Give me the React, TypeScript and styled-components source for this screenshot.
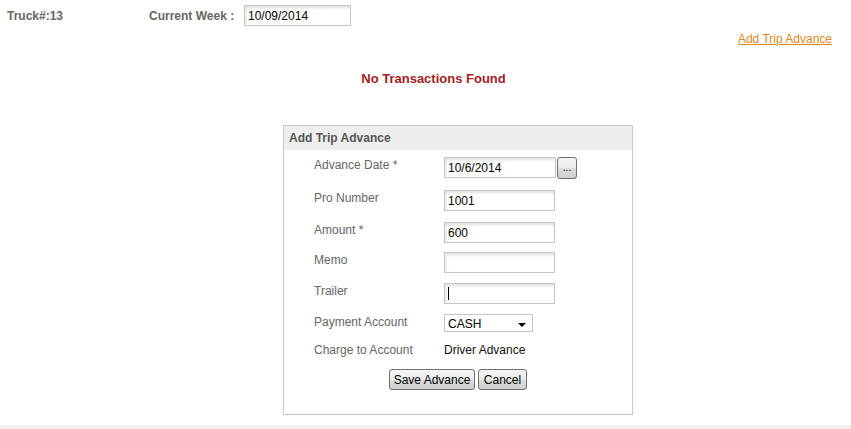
import React from 'react';
import styled, { createGlobalStyle } from 'styled-components';

const GlobalStyle = createGlobalStyle`
  html, body {
    margin: 0;
    padding: 0;
    background: #ffffff;
    font-family: "Liberation Sans", Arial, sans-serif;
    font-size: 12px;
  }
`;

const Page = styled.div`
  width: 851px;
  height: 429px;
  display: flex;
  flex-direction: column;
  overflow: hidden;
`;

const TopBar = styled.div`
  display: flex;
  align-items: center;
  height: 32px;
  padding-left: 7px;
  padding-bottom: 1px;
  box-sizing: border-box;
`;

const TopLabel = styled.div<{ width: number }>`
  width: ${p => p.width}px;
  font-weight: bold;
  color: #666666;
  font-size: 12px;
`;

const TextInput = styled.input<{ w?: number }>`
  box-sizing: border-box;
  width: ${p => p.w ?? 111}px;
  height: 21px;
  margin: 0;
  padding: 1px 3px 0;
  border: 1px solid #c6c6c6;
  box-shadow: inset 1px 2px 3px rgba(0, 0, 0, 0.12);
  font-family: "Liberation Sans", Arial, sans-serif;
  font-size: 12px;
  color: #000000;
  background: #ffffff;
  outline: none;
`;

const LinkRow = styled.div`
  text-align: right;
  padding-right: 19px;
  line-height: 14px;
  height: 14px;
`;

const OrangeLink = styled.a`
  color: #e2871c;
  text-decoration: underline;
  font-size: 12px;
  cursor: pointer;
`;

const Message = styled.div`
  margin-top: 25px;
  padding-left: 16px;
  text-align: center;
  font-weight: bold;
  font-size: 13px;
  line-height: 16px;
  color: #a31d24;
`;

const Panel = styled.div`
  margin: 38px 0 0 283px;
  width: 350px;
  height: 290px;
  box-sizing: border-box;
  border: 1px solid #c8c8c8;
  display: flex;
  flex-direction: column;
`;

const PanelHeader = styled.div`
  height: 24px;
  line-height: 24px;
  background: #eeeeee;
  padding-left: 5px;
  font-weight: bold;
  color: #555555;
  font-size: 12px;
`;

const PanelBody = styled.div`
  padding: 7px 0 0 30px;
  display: flex;
  flex-direction: column;
`;

const FormRow = styled.div<{ h: number }>`
  display: flex;
  align-items: flex-start;
  height: ${p => p.h}px;
`;

const FieldLabel = styled.div`
  width: 130px;
  color: #666666;
  font-size: 12px;
  line-height: 14px;
  margin-top: 1px;
`;

const FieldValue = styled.div`
  color: #111111;
  font-size: 12px;
  line-height: 14px;
  margin-top: 1px;
`;

const InputWrap = styled.div`
  position: relative;
  display: flex;
  align-items: flex-start;
`;

const Caret = styled.span`
  position: absolute;
  left: 4px;
  top: 4px;
  width: 1px;
  height: 13px;
  background: #000000;
`;

const ClassicButton = styled.button<{ w: number; h?: number }>`
  box-sizing: border-box;
  width: ${p => p.w}px;
  height: ${p => p.h ?? 21}px;
  margin: 0;
  padding: 0;
  border: 1px solid #707070;
  border-radius: 3px;
  background: linear-gradient(#f4f4f4 0%, #ebebeb 50%, #dddddd 51%, #cfcfcf 100%);
  font-family: "Liberation Sans", Arial, sans-serif;
  font-size: 12px;
  color: #000000;
  display: flex;
  align-items: center;
  justify-content: center;
`;

const DotsButton = styled(ClassicButton)`
  margin-left: 1px;
  font-size: 10px;
  align-items: flex-end;
  padding-bottom: 5px;
`;

const SelectBox = styled.div`
  box-sizing: border-box;
  width: 89px;
  height: 18px;
  border: 1px solid #c6c6c6;
  padding: 1px 0 0 3px;
  font-size: 12px;
  line-height: 14px;
  color: #000000;
  display: flex;
  align-items: center;
  justify-content: space-between;
`;

const SelectArrow = styled.span`
  width: 0;
  height: 0;
  margin-right: 6px;
  margin-top: 2px;
  border-left: 4px solid transparent;
  border-right: 4px solid transparent;
  border-top: 4px solid #000000;
`;

const ButtonRow = styled.div`
  display: flex;
  justify-content: center;
  gap: 3px;
  margin-top: 12px;
  margin-left: -30px;
`;

const BottomBand = styled.div`
  margin-top: 10px;
  flex: 1;
  background: #f0f0f0;
`;

const App = () => {
  return (
    <Page>
      <GlobalStyle />
      <TopBar>
        <TopLabel width={142}>Truck#:13</TopLabel>
        <TopLabel width={95}>Current Week :</TopLabel>
        <TextInput w={107} defaultValue="10/09/2014" />
      </TopBar>
      <LinkRow>
        <OrangeLink>Add Trip Advance</OrangeLink>
      </LinkRow>
      <Message>No Transactions Found</Message>
      <Panel>
        <PanelHeader>Add Trip Advance</PanelHeader>
        <PanelBody>
          <FormRow h={33}>
            <FieldLabel>Advance Date *</FieldLabel>
            <InputWrap>
              <TextInput w={112} defaultValue="10/6/2014" />
              <DotsButton w={20} h={22}>...</DotsButton>
            </InputWrap>
          </FormRow>
          <FormRow h={32}>
            <FieldLabel>Pro Number</FieldLabel>
            <TextInput defaultValue="1001" />
          </FormRow>
          <FormRow h={30}>
            <FieldLabel>Amount *</FieldLabel>
            <TextInput defaultValue="600" />
          </FormRow>
          <FormRow h={31}>
            <FieldLabel>Memo</FieldLabel>
            <TextInput defaultValue="" />
          </FormRow>
          <FormRow h={31}>
            <FieldLabel>Trailer</FieldLabel>
            <InputWrap>
              <TextInput defaultValue="" />
              <Caret />
            </InputWrap>
          </FormRow>
          <FormRow h={28}>
            <FieldLabel>Payment Account</FieldLabel>
            <SelectBox>
              CASH
              <SelectArrow />
            </SelectBox>
          </FormRow>
          <FormRow h={15}>
            <FieldLabel>Charge to Account</FieldLabel>
            <FieldValue>Driver Advance</FieldValue>
          </FormRow>
          <ButtonRow>
            <ClassicButton w={86}>Save Advance</ClassicButton>
            <ClassicButton w={49}>Cancel</ClassicButton>
          </ButtonRow>
        </PanelBody>
      </Panel>
      <BottomBand />
    </Page>
  );
};

export default App;
